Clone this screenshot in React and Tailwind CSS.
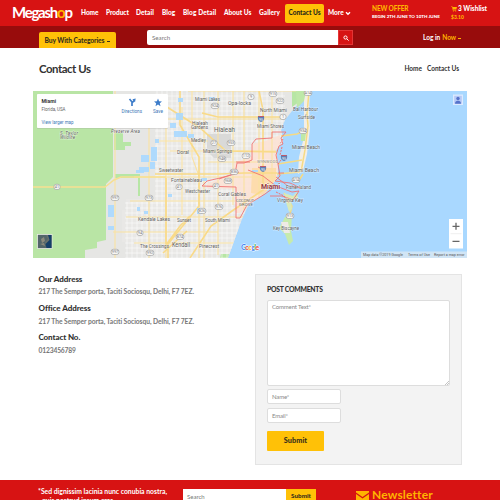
import React from "react";

const navItems = [
  ["Home", "w-[25px] tracking-[-0.05px]"],
  ["Product", "w-[30px] tracking-[-0.05px]"],
  ["Detail", "w-[26px] tracking-[0.1px]"],
  ["Blog", "w-[21px] tracking-[0px]"],
  ["Blog Detail", "w-[41px] tracking-[0.1px]"],
  ["About Us", "w-[35px] tracking-[0px]"],
  ["Gallery", "w-[26px] tracking-[0.05px]"],
];

// label, x, baseline, width, size
const places = [
  ["Miami Lakes", 195, 101, 25, 5],
  ["Opa-locka", 228, 104.5, 23, 5],
  ["Hialeah", 192, 124.5, 16, 4.5],
  ["Gardens", 191, 129, 17, 4.5],
  ["Hialeah", 214, 132, 21, 7],
  ["Medley", 191, 141.5, 15, 4.8],
  ["Doral", 177, 154, 12, 5],
  ["Miami Springs", 203, 152.5, 29, 5],
  ["Sweetwater", 159, 172, 24, 5],
  ["Fontainebleau", 171, 182, 31, 5.2],
  ["Westchester", 185, 192.5, 25, 5],
  ["Coral Gables", 218, 196, 28, 5.2],
  ["Kendale Lakes", 138, 220.5, 32, 5.2],
  ["Sunset", 177, 222, 14, 5],
  ["South Miami", 205, 222, 25, 5],
  ["Kendall", 172, 246.5, 18, 6.3],
  ["The Crossings", 140, 248, 29, 5],
  ["Pinecrest", 199, 248, 20, 5],
  ["North Miami", 260, 112, 27, 5.2],
  ["Bal Harbour", 293, 110.5, 25, 5],
  ["Surfside", 298, 119, 17, 5],
  ["Miami Shores", 257, 128, 27, 5],
  ["Miami Beach", 292, 149, 28, 5.4],
  ["Miami Beach", 289, 171.5, 30, 5.2],
  ["Fisher Island", 286, 189, 25, 4.8],
  ["Virginia Key", 277, 202, 26, 5],
  ["Key Biscayne", 273, 230, 26, 4.8],
];

const shields = [
  ["9", 251, 97], ["924", 215, 106], ["27", 214, 143], ["953", 231, 143],
  ["948", 222, 159], ["112", 246, 156], ["836", 234, 172], ["41", 57, 187],
  ["41", 179, 187], ["41", 216, 186], ["968", 228, 181], ["973", 149, 198],
  ["976", 219, 207], ["826", 202, 211], ["997", 115, 198], ["94", 140, 233],
  ["874", 180, 237], ["992", 150, 253], ["997", 115, 252], ["915", 273, 94],
  ["922", 280, 101], ["1", 283, 117], ["934", 303, 131], ["A1A", 308, 93],
  ["A1A", 296, 180], ["913", 290, 216],
];

const lakes = [
  [141, 155, 8, 7], [139, 167, 10, 5], [151, 147, 6, 14], [150, 162, 5, 7],
  [176, 113, 7, 7], [170, 123, 6, 5], [174, 131, 13, 6], [188, 134, 6, 4],
  [108, 205, 6, 12], [108, 226, 6, 4], [136, 170, 8, 3], [155, 139, 4, 4],
  [201, 178, 6, 3], [197, 208, 5, 6], [168, 194, 4, 3], [137, 207, 3, 4],
  [144, 211, 4, 3], [210, 97, 5, 4], [178, 98, 5, 4], [252, 170, 6, 2],
];

function range(start, end, step) {
  const list = [];
  for (let v = start; v <= end; v += step) list.push(v);
  return list;
}

function MiamiMap() {
  return (
    <svg viewBox="33 91 434 167" className="block h-[167px] w-[434px]" fontFamily="Roboto, sans-serif">
      <defs>
        <clipPath id="land">
          <path d="M113 91H304L301 101L292 111L285 120L281 130L283 142L276 150L278 165L277 178L270 187L265 193L257 199L249 204L242 219L238 230L228 258H80L85 253L97 242L106 240V184L113 177Z" />
        </clipPath>
      </defs>
      <rect x="33" y="91" width="434" height="167" fill="#a9d8ff" />
      <path d="M33 91H304L301 101L292 111L285 120L281 130L283 142L276 150L278 165L277 178L270 187L265 193L257 199L249 204L242 219L238 230L228 258H33Z" fill="#e6e6e4" />
      <path d="M33 91H113V177L106 184V240L97 242V248L85 250V258H33Z" fill="#b9e5a5" />
      <path d="M114 133h9v9h8v4h-6v4h-11zM115 174h25v22h-2v-18h-23zM220 110h8l6 3v4h-13zM292 91h12l-5 11-7 5zM224 242l8-3-4 19h-8z" fill="#b7e6a5" />
      <g clipPath="url(#land)">
        <path d="M126 199h113v55H129v-12h-7v-32h4zM155 93h128v111H155z" fill="#e9e8e6" />
        <g stroke="#fff" strokeOpacity=".75" strokeWidth=".7">
          {range(157, 285, 5).map((x) => <path key={x} d={`M${x} 91V206`} />)}
          {range(127, 237, 5).map((x) => <path key={x} d={`M${x} 202V258`} />)}
          {range(96, 202, 5).map((y) => <path key={y} d={`M155 ${y}H285`} />)}
          {range(203, 258, 5).map((y) => <path key={y} d={`M125 ${y}H245`} />)}
        </g>
        <path d="M207 134h24v24h-17l-7-7z" fill="#d9d9d8" />
        <path d="M265 141l-13 3v12l-18 7v14l-15 2-12 5v4l29 1v24h4l10-9 17-12 13-16V135z" fill="#fde2d3" fillOpacity=".85" />
        <path d="M252 168h24v20l-13 7-12-2z" fill="#fddcad" />
        <g stroke="#fae2a0" strokeWidth="1.1" fill="none">
          <path d="M115 91V258M166 100V258M149 112V258M182 107V215M192 91V157L199 176V258M204 91V258M218 91V255M233 91V205M244 91V210M259 91V197M272 91V187M165 119H281M155 141H208M170 151H278M208 162H278M134 177H276M130 201H248M126 217H244M113 232H218M134 243H236M188 91H300" />
        </g>
        <g stroke="#f9da88" strokeWidth="1.6" fill="none">
          <path d="M167 107L200 128L226 151L278 152M155 174H220L244 173H278M166 178V245L180 226L190 216M168 258V244L199 206V157L180 125V91M202 113L218 117H286M259 91L263 110V190L232 211L211 226L190 258M163 253L187 231" />
        </g>
        {lakes.map(([x, y, w, h], i) => <rect key={i} x={x} y={y} width={w} height={h} fill="#a9d8ff" fillOpacity=".9" />)}
      </g>
      <path d="M33 187H105L114 180L121 177H166" stroke="#f8df91" strokeWidth="1.5" fill="none" />
      <path d="M304 91H310L309 110L310 128L307 154L303 171L298 174L299 157L304 137Z" fill="#f3eee5" />
      <path d="M296 91h10l-2 10-7 7zM301 133h5l-1 8h-4z" fill="#bee8a8" />
      <path d="M309 91L307 114L308 126L305 150L301 172M281 136L297 134L306 130M278 164L302 160M277 174L300 172M303 174L298 182M284 193l5 8 3 5-3 12-4 7" stroke="#f6da84" strokeWidth="1.5" fill="none" />
      <path d="M284 193l9 3 4-4 1 6-7 3 1 8-3 3-3-10z" fill="#d9eab8" />
      <path d="M285 217l7-3-1 17 2 10-4 4-4-11-6-6z" fill="#c6ebad" />
      <path d="M281 222h7l2 11h-6z" fill="#eeeae5" />
      <path d="M252 144L256 139L272 138V132H286L281 138L283 144L279 146L276 155L278 164L280 176L275 181L290 183L301 188L288 186L276 177M252 144V160L244 163H237L235 174L220 178L207 181L202 186L236 187V218H240L247 205L265 194L276 186M250 162H236M248 170L263 176L276 186L292 192L299 191L293 200L282 196L270 196M258 167L264 170M278 173h6M219 179l20-7" stroke="#ef7474" strokeWidth=".9" fill="none" />
      <path d="M283 139l-3 5M282 147l-2 8M281 160l-3 4M276 192l8 4 5 7" stroke="#ee7373" strokeDasharray="2 1" fill="none" />
      {shields.map(([label, x, y], i) => (
        <g key={i}>
          <rect x={x - (label.length > 2 ? 3.8 : 3)} y={y - 2.7} width={label.length > 2 ? 7.6 : 6} height="5.2" rx="2" fill="#f7f7f5" stroke="#a5a5a5" strokeWidth=".7" />
          <text x={x} y={y + 1.4} fontSize="3.8" textAnchor="middle" fill="#777">{label}</text>
        </g>
      ))}
      {[[261, 119], [284, 158], [263, 169]].map(([x, y], i) => (
        <g key={i}>
          <path d={`M${x - 3} ${y - 3}h6q1 5-3 6q-4-1-3-6z`} fill="#5d7fb4" />
          <path d={`M${x - 2.6} ${y - 2.5}h5.2`} stroke="#c45967" />
          <text x={x} y={y + 1.8} fontSize="3.5" textAnchor="middle" fill="#fff">95</text>
        </g>
      ))}
      <g fill="#626262" stroke="#fff" strokeWidth="1" strokeOpacity=".45" paintOrder="stroke">
        {places.map(([label, x, y, w, s], i) => (
          <text key={i} x={x} y={y} fontSize={s} textLength={w} lengthAdjust="spacingAndGlyphs">{label}</text>
        ))}
        <text x="60" y="134.5" fontSize="4.6" fontStyle="italic" textLength="18">S. Taylor</text>
        <text x="60" y="139.3" fontSize="4.6" fontStyle="italic" textLength="15">Wildlife</text>
        <text x="111" y="132.8" fontSize="4.7" fontStyle="italic" textLength="29">Preserve Area</text>
        <text x="236" y="202" fontSize="4.3" textLength="18">COCONUT</text>
        <text x="239" y="206" fontSize="4.3" textLength="14">GROVE</text>
        <text x="257" y="162.5" fontSize="4" fill="#888" textLength="21">WYNWOOD</text>
      </g>
      <text x="261" y="189" fontSize="7" fontWeight="700" fill="#93373d" stroke="#fff" strokeWidth=".8" strokeOpacity=".7" paintOrder="stroke" textLength="19">Miami</text>
      <text x="241" y="250" fontSize="7.2" fontFamily="Lato, sans-serif" fontWeight="700" textLength="18" stroke="#fff" strokeWidth=".8" paintOrder="stroke">
        <tspan fill="#4285f4">G</tspan><tspan fill="#ea4335">o</tspan><tspan fill="#fbbc05">o</tspan><tspan fill="#4285f4">g</tspan><tspan fill="#34a853">l</tspan><tspan fill="#ea4335">e</tspan>
      </text>

      <rect x="37" y="94" width="131" height="34.8" fill="#999" opacity=".3" />
      <rect x="37" y="94" width="131" height="34" rx=".8" fill="#fff" />
      <text x="41.5" y="103" fontSize="5.7" fontWeight="700" fill="#333" textLength="14.5" lengthAdjust="spacingAndGlyphs">Miami</text>
      <text x="41.5" y="110.8" fontSize="4.8" fill="#666" textLength="24" lengthAdjust="spacingAndGlyphs">Florida, USA</text>
      <text x="41.5" y="124" fontSize="5" fill="#3e78b7" textLength="32" lengthAdjust="spacingAndGlyphs">View larger map</text>
      <text x="121.5" y="112.7" fontSize="5" fill="#3e78b7" textLength="20.5" lengthAdjust="spacingAndGlyphs">Directions</text>
      <text x="153" y="112.7" fontSize="5" fill="#3e78b7" textLength="10" lengthAdjust="spacingAndGlyphs">Save</text>
      <path d="M132 106V102L129.5 99M132 103L134.2 100.4" stroke="#3e7dca" strokeWidth="1.7" fill="none" />
      <path d="M132.4 99.2l3.3-.7-.7 3.7z" fill="#3e7dca" />
      <path d="M158 98.5l1.1 2.7 2.9.2-2.2 1.9.7 2.9-2.5-1.6-2.5 1.6.7-2.9-2.2-1.9 2.9-.2z" fill="#3e7dca" />

      <rect x="37.5" y="234.5" width="14.5" height="14" fill="#68716c" stroke="#eee" strokeWidth=".7" />
      <path d="M38 235h8l2 4-3 3 2 6h-9z" fill="#53666a" />
      <path d="M48 235h3.5v13h-5l-1-4 4-4z" fill="#143f69" />
      <path d="M41 239l3-2 1 4-3 2zM40 244l4-1 1 3z" fill="#8c8b7c" />
      <rect x="453" y="94.5" width="10" height="10.5" fill="#dceaff" />
      <rect x="454.2" y="95.8" width="7.6" height="8" fill="#b6c9f5" />
      <circle cx="458" cy="98.5" r="1.7" fill="#5572ca" />
      <path d="M455 103.8q0-3 3-3t3 3z" fill="#5572ca" />
      <rect x="449" y="219" width="14" height="29.5" fill="#fff" />
      <path d="M450.5 233.7h11" stroke="#e4e4e4" strokeWidth=".6" />
      <path d="M452.5 226.3h7M456 222.8v7M452.5 241.3h7" stroke="#666" strokeWidth="1.3" />
      <rect x="361" y="251.5" width="106" height="6.5" fill="#d1e5f5" />
      <g fill="#555" fontSize="4.3">
        <text x="363" y="256" textLength="40" lengthAdjust="spacingAndGlyphs">Map data ©2019 Google</text>
        <text x="408" y="256" textLength="22" lengthAdjust="spacingAndGlyphs">Terms of Use</text>
        <text x="434" y="256" textLength="30.5" lengthAdjust="spacingAndGlyphs">Report a map error</text>
      </g>
    </svg>
  );
}

function Header() {
  return (
    <header className="text-white">
      <div className="flex h-[26px] items-center bg-[#d71313] pl-3 text-[6.5px] font-black">
        <h1 className="w-[69px] shrink-0 pb-0.5 text-[15px] leading-none font-bold tracking-[-1.25px]">Megash<span className="text-[#ffb700]">o</span>p</h1>
        <nav className="flex shrink-0 items-center">
          {navItems.map(([label, cls]) => <a key={label} className={`${cls} shrink-0 whitespace-nowrap`}>{label}</a>)}
          <a className="flex h-[19px] w-[39px] items-center justify-center rounded-xs bg-[#ffc107] tracking-[0px] whitespace-nowrap text-[#292719]">Contact Us</a>
          <a className="ml-1 flex w-11 items-center gap-px">More
            <svg viewBox="0 0 6 5" className="h-[5px] w-1.5"><path d="M1 1.2L3 3.3L5 1.2" fill="none" stroke="currentColor" strokeWidth="1.4" /></svg>
          </a>
        </nav>
        <div className="w-[79px] shrink-0 whitespace-nowrap">
          <p className="text-[6.5px] leading-[8px] tracking-[-0.15px] text-[#ffb400]">NEW OFFER</p>
          <p className="text-[4.5px] leading-[8px]">BEGIN 2TH JUNE TO 10TH JUNE</p>
        </div>
        <div className="whitespace-nowrap">
          <p className="flex items-center text-[6.5px] leading-[8px]">
            <svg viewBox="0 0 7 6" className="mr-px h-1.5 w-1.5" fill="#ffb400"><path d="M0 0h1.8l.2.8H7L6.2 3.5H2.6l.1.6H6v.6H2.1L1.3.7H0z" /><circle cx="2.8" cy="5.3" r=".6" /><circle cx="5.5" cy="5.3" r=".6" /></svg>
            3 Wishlist
          </p>
          <p className="text-[5px] leading-[8px] text-[#ffb400]">$3.10</p>
        </div>
      </div>
      <div className="flex h-[22px] bg-[#980c0c] pl-[39px]">
        <button className="mt-1.5 flex h-4 w-[77px] shrink-0 items-center justify-center gap-[3px] rounded-t-xs bg-[#ffc107] text-[6.7px] font-black tracking-[-0.1px] whitespace-nowrap text-[#39301b]">
          Buy With Categories <span className="mt-0.5 h-px w-[3px] bg-[#39301b]" />
        </button>
        <div className="mt-1 ml-[31px] flex h-[15px] w-[206px] shrink-0">
          <div className="flex flex-1 items-center rounded-l-xs bg-white pl-[5px] text-[6.2px] leading-[9px] text-[#777]">Search</div>
          <div className="flex w-[15px] items-center justify-center border border-[#e43535] bg-[#d71313]">
            <svg viewBox="0 0 6 6" className="size-1.5" fill="none" stroke="#fff"><circle cx="2.5" cy="2.5" r="1.6" /><path d="M3.8 3.8L5.6 5.6" /></svg>
          </div>
        </div>
        <p className="ml-[70px] flex items-center gap-0.5 pt-px text-[6.5px] font-bold whitespace-nowrap">Log in <span className="text-[#ffb400]">Now</span><span className="mt-0.5 h-px w-[3px] bg-[#ffb400]" /></p>
      </div>
    </header>
  );
}

function Addresses() {
  return (
    <section className="w-[217px] pl-[0.5px] text-[6.7px] whitespace-nowrap">
      <h3 className="text-[8px] leading-[12px] font-black tracking-[-0.05px] text-[#333]">Our Address</h3>
      <p className="mb-1 leading-[13px] font-bold tracking-[-0.05px] text-[#777]">217 The Semper porta, Taciti Sociosqu, Delhi, F7 7EZ.</p>
      <h3 className="text-[8px] leading-[13px] font-black tracking-[-0.05px] text-[#333]">Office Address</h3>
      <p className="mb-1 leading-[12px] font-bold tracking-[-0.05px] text-[#777]">217 The Semper porta, Taciti Sociosqu, Delhi, F7 7EZ.</p>
      <h3 className="text-[8px] leading-[13px] font-black tracking-[-0.1px] text-[#333]">Contact No.</h3>
      <p className="leading-[12px] font-bold tracking-[-0.15px] text-[#777]">0123456789</p>
    </section>
  );
}

function CommentForm() {
  return (
    <form className="mt-[1px] h-[191px] w-[207px] border border-[#e4e4e4] bg-[#f3f3f3] pt-2 pl-[11px] text-[6px] text-[#888]">
      <h3 className="h-[17px] text-[6.8px] leading-[13px] font-black tracking-[-0.24px] text-[#333]">POST COMMENTS</h3>
      <div className="flex h-[86px] w-[183px] items-end justify-between rounded-xs border border-[#ddd] bg-white">
        <span className="self-start pt-px pl-1 tracking-[-0.15px]">Comment Text*</span>
        <svg viewBox="0 0 5 5" className="size-[5px]" stroke="#aaa" strokeWidth=".7"><path d="M1 5L5 1M3 5L5 3" /></svg>
      </div>
      <div className="mt-[3px] flex h-[15px] w-[74px] items-center rounded-xs border border-[#ddd] bg-white pl-1 tracking-[-0.15px]">Name*</div>
      <div className="mt-1 flex h-[15px] w-[74px] items-center rounded-xs border border-[#ddd] bg-white pl-1 tracking-[-0.15px]">Email*</div>
      <button type="button" className="mt-2 block h-[20px] w-[57px] rounded-[1px] bg-[#ffc107] text-[7.3px] font-black tracking-[0.05px] text-[#39301b]">Submit</button>
    </form>
  );
}

export default function App() {
  return (
    <div className="flex h-[500px] w-[500px] flex-col overflow-hidden bg-white font-['Lato',sans-serif]">
      <Header />
      <main className="h-[432px] shrink-0 px-[33px]">
        <div className="flex h-[43px] items-center justify-between pr-2 pl-1.5 text-[#333]">
          <h2 className="pb-px text-[11.4px] font-bold tracking-[-0.45px]">Contact Us</h2>
          <div className="mb-0.5 flex gap-[5px] text-[6.5px] font-bold"><span>Home</span><span>Contact Us</span></div>
        </div>
        <MiamiMap />
        <div className="flex pt-[15px] pl-[5px]">
          <Addresses />
          <CommentForm />
        </div>
      </main>
      <footer className="flex h-5 shrink-0 bg-[#d71313] pt-[7px] pl-[38px] text-white">
        <p className="w-[145px] shrink-0 text-[6.8px] leading-[9px] font-bold whitespace-nowrap">*Sed dignissim lacinia nunc conubia nostra,<br /><span className="pl-1">quis nostrud ipsum cras.</span></p>
        <div className="mt-[2px] flex h-4 w-[133px] shrink-0">
          <div className="flex flex-1 items-center bg-white pb-0.5 pl-1 text-[6px] text-[#777]">Search</div>
          <div className="flex w-[30px] items-center justify-center bg-[#ffc107] pb-0.5 text-[6.3px] font-black text-[#39301b]">Submit</div>
        </div>
        <h3 className="ml-10 flex h-[15px] items-center gap-[3px] text-[12px] font-bold tracking-[0.15px] text-[#ffb400]">
          <svg viewBox="0 0 13 10" className="mt-0.5 h-2.5 w-[13px]" fill="currentColor"><path d="M0 0h13v1.5L6.5 6L0 1.5zM0 3l6.5 4.5L13 3v7H0z" /></svg>
          Newsletter
        </h3>
      </footer>
    </div>
  );
}
